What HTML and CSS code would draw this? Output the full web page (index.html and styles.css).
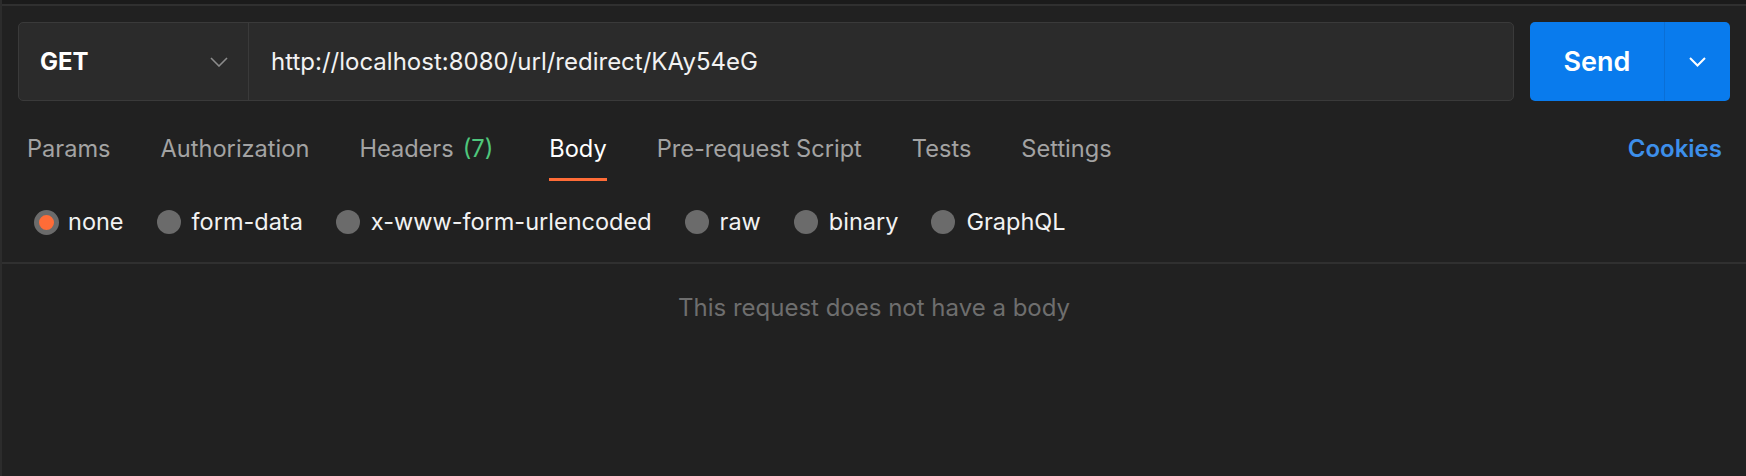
FILE: index.html
```html
<!DOCTYPE html>
<html lang="en">
<head>
<meta charset="utf-8">
<title>Request</title>
<link rel="stylesheet" href="styles.css">
</head>
<body>
<div class="app">
  <div class="topbar"></div>
  <div class="request-row">
    <div class="url-group">
      <div class="method">
        <span class="method-name">GET</span>
        <svg class="chev" width="18" height="10" viewBox="0 0 18 10"><path d="M1 1 L9 9 L17 1" fill="none" stroke="#8c8c8c" stroke-width="1.6"/></svg>
      </div>
      <div class="url">http://localhost:8080/url/redirect/KAy54eG</div>
    </div>
    <div class="send">
      <span class="send-main">Send</span>
      <span class="send-split"><svg width="17" height="10" viewBox="0 0 17 10"><path d="M1 1 L8.5 8.5 L16 1" fill="none" stroke="#ffffff" stroke-width="2"/></svg></span>
    </div>
  </div>
  <div class="tabs-row">
    <nav class="tabs">
      <span class="tab">Params</span>
      <span class="tab">Authorization</span>
      <span class="tab">Headers<span class="count">(7)</span></span>
      <span class="tab active">Body</span>
      <span class="tab">Pre-request Script</span>
      <span class="tab">Tests</span>
      <span class="tab">Settings</span>
    </nav>
    <span class="cookies">Cookies</span>
  </div>
  <div class="body-types">
    <label class="radio"><span class="dot checked"></span>none</label>
    <label class="radio"><span class="dot"></span>form-data</label>
    <label class="radio"><span class="dot"></span>x-www-form-urlencoded</label>
    <label class="radio"><span class="dot"></span>raw</label>
    <label class="radio"><span class="dot"></span>binary</label>
    <label class="radio"><span class="dot"></span>GraphQL</label>
  </div>
  <div class="empty">This request does not have a body</div>
</div>
</body>
</html>
```
FILE: styles.css
```css
* { box-sizing: border-box; }
html, body { margin: 0; padding: 0; }
body {
  background: #212121;
  font-family: Inter, "Noto Sans", sans-serif;
  color: #f0f0f0;
  width: 1746px;
  height: 476px;
  overflow: hidden;
}
.app {
  height: 476px;
  border-left: 2px solid #2c2c2c;
  display: flex;
  flex-direction: column;
}
.topbar {
  height: 6px;
  background: #1b1b1b;
  border-bottom: 2px solid #303030;
}
.request-row {
  display: flex;
  gap: 16px;
  padding: 16px 16px 0 16px;
}
.url-group {
  flex: 1;
  height: 79px;
  display: flex;
  background: #2b2b2b;
  border: 1px solid #3a3a3a;
  border-radius: 5px;
}
.method {
  width: 230px;
  display: flex;
  align-items: center;
  justify-content: space-between;
  padding: 0 20px 0 21px;
  border-right: 1px solid #3a3a3a;
}
.method-name {
  font-size: 24px;
  font-weight: 700;
  color: #ffffff;
}
.url {
  flex: 1;
  display: flex;
  align-items: center;
  padding-left: 22px;
  font-size: 24px;
  color: #f2f2f2;
}
.send {
  width: 200px;
  height: 79px;
  display: flex;
  background: #097bed;
  border-radius: 5px;
  color: #ffffff;
}
.send-main {
  width: 135px;
  display: flex;
  align-items: center;
  justify-content: center;
  font-size: 27px;
  font-weight: 600;
  border-right: 1px solid #0a6fd6;
}
.send-split {
  flex: 1;
  display: flex;
  align-items: center;
  justify-content: center;
}
.tabs-row {
  display: flex;
  justify-content: space-between;
  align-items: flex-start;
  margin-top: 33px;
  padding: 0 24px 0 25px;
}
.tabs {
  display: flex;
  gap: 50px;
}
.tab {
  font-size: 23.6px;
  line-height: 30px;
  color: #a3a3a3;
  padding-bottom: 14px;
  border-bottom: 3px solid transparent;
  white-space: nowrap;
}
.tab.active {
  color: #ffffff;
  border-bottom-color: #ff6c37;
}
.count {
  color: #4fc77c;
  margin-left: 9px;
  padding-right: 6px;
}
.cookies {
  font-size: 24px;
  line-height: 30px;
  font-weight: 600;
  color: #3d8fea;
}
.body-types {
  display: flex;
  align-items: center;
  gap: 33px;
  margin-top: 26px;
  padding: 0 0 25px 32px;
  border-bottom: 2px solid #303030;
}
.radio {
  display: flex;
  align-items: center;
  gap: 11px;
  font-size: 23.5px;
  line-height: 30px;
  color: #f2f2f2;
}
.dot {
  width: 24px;
  height: 24px;
  border-radius: 50%;
  background: #6b6b6b;
}
.dot.checked {
  width: 25px;
  height: 25px;
  margin-right: -2px;
  background: #ff6c37;
  border: 5px solid #6b6b6b;
}
.empty {
  padding-top: 29px;
  text-align: center;
  font-size: 24px;
  line-height: 30px;
  color: #6e6e6e;
}
```
